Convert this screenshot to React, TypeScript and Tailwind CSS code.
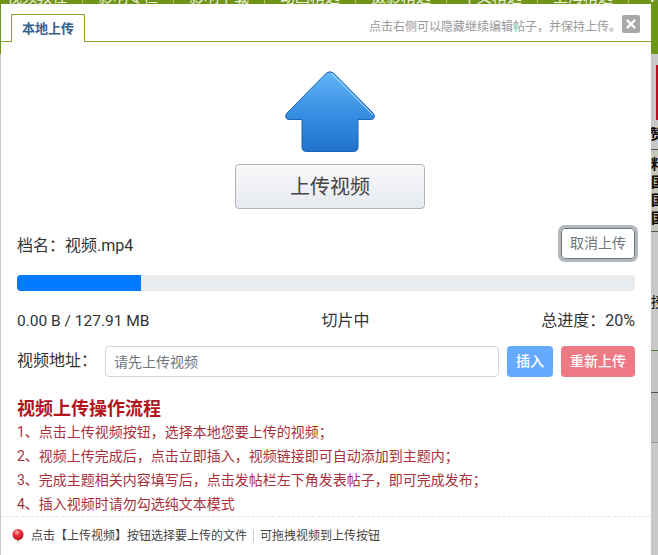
import React from 'react';
import { X } from 'lucide-react';

const navItems = ['视频教程', '影响专栏', '影响下载', '动画精选', '摄影精选', '中文精选', '上海精选', 'VIP专区'];

// full-width punctuation written as escapes
const steps = [
  '1、点击上传视频按钮\uFF0C选择本地您要上传的视频\uFF1B',
  '2、视频上传完成后\uFF0C点击立即插入\uFF0C视频链接即可自动添加到主题内\uFF1B',
  '3、完成主题相关内容填写后\uFF0C点击发帖栏左下角发表帖子\uFF0C即可完成发布\uFF1B',
  '4、插入视频时请勿勾选纯文本模式',
];

function UploadArrow() {
  return (
    <svg width="92" height="81" viewBox="0 0 92 81" className="block">
      <defs>
        <linearGradient id="arrowFill" x1="0" y1="0" x2="0" y2="1">
          <stop offset="0" stopColor="#63b6f6" />
          <stop offset="0.5" stopColor="#3a90e4" />
          <stop offset="1" stopColor="#1f72cd" />
        </linearGradient>
      </defs>
      <path
        d="M42.500 2 Q46 -0.500 49.500 2 L89.500 42.500 Q92 47.500 87.500 48.500 L74 48.500 L74 76 Q74 80.500 69.500 80.500 L22.500 80.500 Q18 80.500 18 76 L18 48.500 L4.500 48.500 Q0 47.500 2.500 42.500 Z"
        fill="url(#arrowFill)"
        stroke="#1c64b4"
        strokeWidth="1"
      />
      <path d="M47 2 L89 44" fill="none" stroke="#bfe2fb" strokeWidth="1" />
    </svg>
  );
}

function Pin() {
  return (
    <svg width="12" height="15" viewBox="0 0 12 15" className="block shrink-0">
      <defs>
        <radialGradient id="pinFill" cx="0.4" cy="0.3" r="0.7">
          <stop offset="0" stopColor="#ffb3b3" />
          <stop offset="0.45" stopColor="#ee2c36" />
          <stop offset="1" stopColor="#b51820" />
        </radialGradient>
      </defs>
      <path d="M6 14 L4.500 10 L7.500 10 Z" fill="#b9a08a" />
      <circle cx="6" cy="5.500" r="5.500" fill="url(#pinFill)" />
    </svg>
  );
}

export default function App() {
  return (
    <div
      className="relative w-[658px] h-[555px] overflow-hidden bg-[#c8c8c8]"
      style={{ fontFamily: 'Roboto, "Noto Sans CJK SC", "Liberation Sans", sans-serif' }}
    >
      {/* page behind the dialog */}
      <div className="h-[54px] bg-[#6c9616]">
        <div className="-ml-[8px] flex h-[4px] overflow-hidden bg-[#6f9418] text-[15px] leading-[4px] text-[#f2f2e0]">
          {navItems.map((item) => (
            <div key={item} className="flex w-[91px] shrink-0 justify-center border-r border-[#a9c060]">
              <span className="-translate-y-[5px]">{item}</span>
            </div>
          ))}
        </div>
      </div>
      <div className="ml-auto w-[7px] text-[14px] text-black">
        <div className="mt-[11px] ml-[5px] h-[55px] bg-[#b8101c]" />
        <div className="h-[30px] overflow-hidden border-b border-[#555] pt-[4px] font-bold leading-[20px]">
          <span className="block w-[14px] -translate-x-[1px]">赞</span>
        </div>
        <div className="h-[82px] overflow-hidden border-b border-[#555] bg-[#c6c6b8] pt-[5px] font-bold leading-[18px]">
          <span className="block">料</span>
          <span className="block">国</span>
          <span className="block">国</span>
          <span className="block">国</span>
        </div>
        <div className="mt-[60px] h-[59px] overflow-hidden border-b border-[#4d7a30] leading-[20px]">授</div>
        <div className="h-[42px] border-b border-[#555] bg-[#c4c4c4]" />
        <div className="h-[50px] border-b border-[#999] bg-[#bdbdbd]" />
      </div>

      {/* dialog */}
      <div className="absolute left-[1px] top-[4px] flex h-[551px] w-[650px] flex-col bg-white">
        <div className="flex h-[38px] shrink-0 border-b border-[#8aa52e]">
          <div className="ml-[10px] mt-[10px] flex h-[28px] w-[74px] items-center justify-center border border-b-0 border-[#8aa52e] bg-white text-[13px] font-bold text-[#33628f]">
            本地上传
          </div>
          <div className="ml-auto mt-[13px] text-[12px] leading-[20px] text-[#999]">{'点击右侧可以隐藏继续编辑帖子\uFF0C并保持上传。'}</div>
          <div className="ml-[1px] mr-[11px] mt-[11px] flex h-[18px] w-[18px] items-center justify-center rounded-[2px] bg-[#a8a8a8]">
            <X size={14} strokeWidth={4} color="#fff" />
          </div>
        </div>

        <div className="flex flex-col items-center pl-[8px] pt-[29px]">
          <UploadArrow />
          <button className="mt-[12px] h-[45px] w-[190px] rounded-[4px] border border-[#b4b4b4] bg-gradient-to-b from-[#f8f9fa] to-[#e6e9f0] text-[20px] text-[#444]">
            上传视频
          </button>
        </div>

        <div className="flex items-center justify-between px-[16px] pt-[19px] text-[16px] text-[#333]">
          <span className="translate-y-[2px]">{'档名\uFF1A视频.mp4'}</span>
          <button className="h-[31px] w-[74px] rounded-[4px] border border-[#6c757d] text-[14px] text-[#6c757d] shadow-[0_0_0_3px_#b3b7bb]">
            取消上传
          </button>
        </div>

        <div className="mx-[16px] mt-[16px] h-[16px] overflow-hidden rounded-[4px] bg-[#e9ecef]">
          <div className="h-full w-[20%] bg-[#007bff]" />
        </div>

        <div className="mx-[16px] mt-[18px] flex items-center justify-between text-[16px] leading-[24px] text-[#333]">
          <span className="whitespace-nowrap text-[15.5px]">0.00 B / 127.91 MB</span>
          <span>切片中</span>
          <span>{'总进度\uFF1A20%'}</span>
        </div>

        <div className="mx-[16px] mt-[13px] flex h-[31px] items-center gap-[8px]">
          <span className="w-[80px] -translate-y-[1px] whitespace-nowrap text-[16px] text-[#333]">{'视频地址\uFF1A'}</span>
          <input
            readOnly
            placeholder="请先上传视频"
            className="h-[31px] flex-1 rounded-[4px] border border-[#ced4da] px-[8px] text-[14px] placeholder:text-[#6c757d]"
          />
          <button className="h-[31px] w-[46px] rounded-[4px] bg-[#66aaff] text-[14px] font-medium text-white">插入</button>
          <button className="h-[31px] w-[74px] rounded-[4px] bg-[#ee7a85] text-[14px] font-medium text-white">重新上传</button>
        </div>

        <div className="mx-[16px] mt-[19px] text-[18px] font-bold leading-[26px] text-[#b0141c]">视频上传操作流程</div>
        <ul className="mx-[16px] mt-[-2px] text-[14px] leading-[24px] text-[#a9303a]">
          {steps.map((step) => (
            <li key={step}>{step}</li>
          ))}
        </ul>

        <div className="flex flex-1 items-center border-t border-dashed border-[#e4e4e4] pl-[11px] text-[12px] text-[#444]">
          <Pin />
          <span className="ml-[7px]">点击【上传视频】按钮选择要上传的文件</span>
          <span className="mx-[6px] h-[12px] border-l border-[#ccc]" />
          <span>可拖拽视频到上传按钮</span>
        </div>
      </div>
    </div>
  );
}
